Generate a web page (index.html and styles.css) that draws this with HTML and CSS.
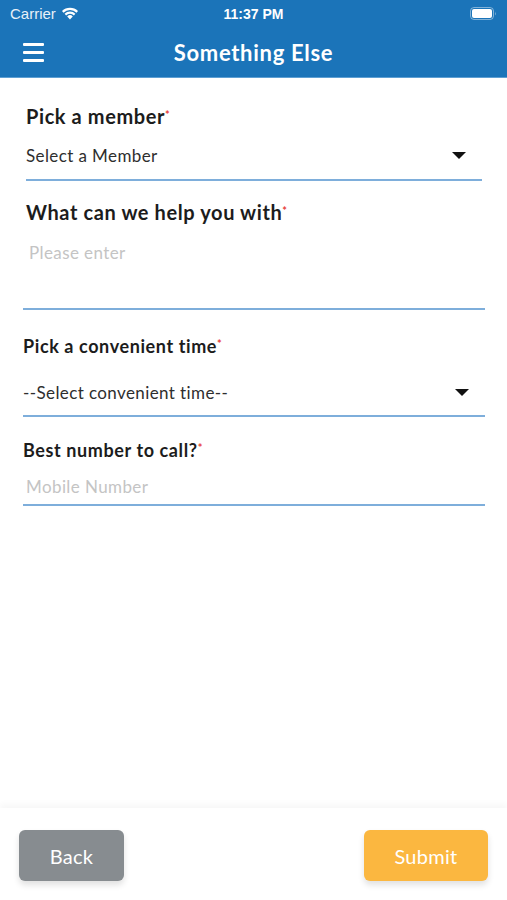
FILE: index.html
```html
<!DOCTYPE html>
<html lang="en">
<head>
<meta charset="UTF-8">
<meta name="viewport" content="width=device-width, initial-scale=1.0">
<title>Something Else</title>
<link rel="stylesheet" href="styles.css">
</head>
<body>

<div class="screen">
  <div class="top-bar">
    <div class="status-bar">
      <div class="carrier">
        Carrier
        <svg class="wifi" width="18" height="13" viewBox="0 0 18 13">
          <path d="M9 12.5 L6.2 9.4 A4 4 0 0 1 11.8 9.4 Z" fill="#fff"/>
          <path d="M3.6 6.8 A7.6 7.6 0 0 1 14.4 6.8 L12.9 8.4 A5.4 5.4 0 0 0 5.1 8.4 Z" fill="#fff"/>
          <path d="M1 4.1 A11.4 11.4 0 0 1 17 4.1 L15.5 5.7 A9.2 9.2 0 0 0 2.5 5.7 Z" fill="#fff"/>
        </svg>
      </div>
      <div class="clock">11:37 PM</div>
      <div class="battery">
        <svg width="27" height="13" viewBox="0 0 27 13">
          <rect x="0.5" y="0.5" width="23" height="12" rx="3.5" fill="none" stroke="rgba(255,255,255,0.45)"/>
          <rect x="2" y="2" width="20" height="9" rx="2" fill="#fff"/>
          <path d="M25 4.5 Q26.5 6.5 25 8.5 Z" fill="rgba(255,255,255,0.45)"/>
        </svg>
      </div>
    </div>
    <div class="nav-bar">
      <button class="menu-btn" aria-label="Menu">
        <span></span><span></span><span></span>
      </button>
      <h1 class="nav-title">Something Else</h1>
    </div>
  </div>

  <form class="form">
    <div class="field field-first">
      <label class="field-label">Pick a member<span class="req">*</span></label>
      <div class="select-row">
        <span class="select-text">Select a Member</span>
        <span class="caret"></span>
      </div>
    </div>

    <div class="field field-help">
      <label class="field-label">What can we help you with<span class="req">*</span></label>
      <div class="textarea-box">
        <span class="placeholder">Please enter</span>
      </div>
    </div>

    <div class="field field-time">
      <label class="field-label">Pick a convenient time<span class="req">*</span></label>
      <div class="select-row">
        <span class="select-text">--Select convenient time--</span>
        <span class="caret"></span>
      </div>
    </div>

    <div class="field field-phone">
      <label class="field-label">Best number to call?<span class="req">*</span></label>
      <div class="input-row">
        <span class="placeholder">Mobile Number</span>
      </div>
    </div>
  </form>

  <div class="footer">
    <button class="btn btn-back">Back</button>
    <button class="btn btn-submit">Submit</button>
  </div>
</div>

</body>
</html>
```

FILE: styles.css
```css
* {
  box-sizing: border-box;
}
body {
  margin: 0;
  font-family: Lato, "Noto Sans", sans-serif;
  background-color: #fff;
  color: #1c1c1c;
}
.screen {
  width: 507px;
  height: 900px;
  display: flex;
  flex-direction: column;
}
.top-bar {
  background-color: #1b74b9;
  border-bottom: 1px solid #5e9fd3;
  color: #fff;
}
.status-bar {
  height: 27px;
  display: flex;
  align-items: center;
  justify-content: space-between;
  padding: 0 10px 0 10px;
  font-family: "Liberation Sans", Arial, sans-serif;
  font-size: 15px;
}
.carrier {
  width: 130px;
  display: flex;
  align-items: center;
  gap: 5px;
  color: #e8f0f8;
}
.clock {
  font-weight: bold;
  font-size: 14px;
}
.battery {
  width: 130px;
  display: flex;
  justify-content: flex-end;
}
.nav-bar {
  height: 50px;
  display: flex;
  align-items: center;
  padding-left: 23px;
}
.menu-btn {
  width: 21px;
  background: none;
  border: none;
  padding: 0;
  display: flex;
  flex-direction: column;
  gap: 5px;
}
.menu-btn span {
  display: block;
  height: 3px;
  background-color: #fff;
  border-radius: 1px;
}
.nav-title {
  flex: 1;
  margin: 0;
  padding-right: 44px;
  text-align: center;
  font-size: 22px;
  font-weight: 700;
  letter-spacing: 0.7px;
}
.form {
  flex: 1;
  padding: 0 22px 0 23px;
}
.field-label {
  display: block;
  font-size: 18px;
  font-weight: 700;
  letter-spacing: 0.6px;
  color: #1c1c1c;
}
.req {
  color: #e8413a;
  font-size: 11px;
  vertical-align: 5px;
}
.select-row {
  display: flex;
  align-items: center;
  justify-content: space-between;
  border-bottom: 2px solid #7eaedb;
  padding-right: 16px;
}
.select-text {
  font-size: 17px;
  letter-spacing: 0.4px;
  color: #2e2e2e;
}
.caret {
  width: 0;
  height: 0;
  border-left: 7px solid transparent;
  border-right: 7px solid transparent;
  border-top: 7px solid #111;
}
.placeholder {
  font-size: 17px;
  letter-spacing: 0.4px;
  color: #c4c4c4;
}
.field-first {
  margin: 0 3px;
  padding-top: 26px;
}
.field-first .field-label,
.field-help .field-label {
  font-size: 20px;
}
.field-first .select-row {
  height: 53px;
  padding-top: 4px;
}
.field-help {
  padding-top: 19px;
}
.field-help .field-label {
  margin-left: 3px;
}
.textarea-box {
  height: 86px;
  border-bottom: 2px solid #7eaedb;
  padding: 18px 0 0 6px;
}
.field-time {
  padding-top: 25px;
}
.field-time .select-row {
  height: 60px;
  padding-top: 12px;
}
.field-phone {
  padding-top: 22px;
}
.input-row {
  height: 45px;
  border-bottom: 2px solid #7eaedb;
  padding: 15px 0 0 3px;
}
.footer {
  height: 92px;
  display: flex;
  justify-content: space-between;
  align-items: flex-start;
  padding: 22px 19px 0 19px;
  box-shadow: 0 -4px 6px rgba(0, 0, 0, 0.03);
}
.btn {
  height: 51px;
  border: none;
  border-radius: 6px;
  color: #fff;
  font-family: Lato, "Noto Sans", sans-serif;
  font-size: 20px;
  letter-spacing: 0.3px;
  box-shadow: 0 4px 6px rgba(0, 0, 0, 0.12);
}
.btn-back {
  width: 105px;
  background-color: #878c90;
}
.btn-submit {
  width: 124px;
  background-color: #fbb740;
}
```
